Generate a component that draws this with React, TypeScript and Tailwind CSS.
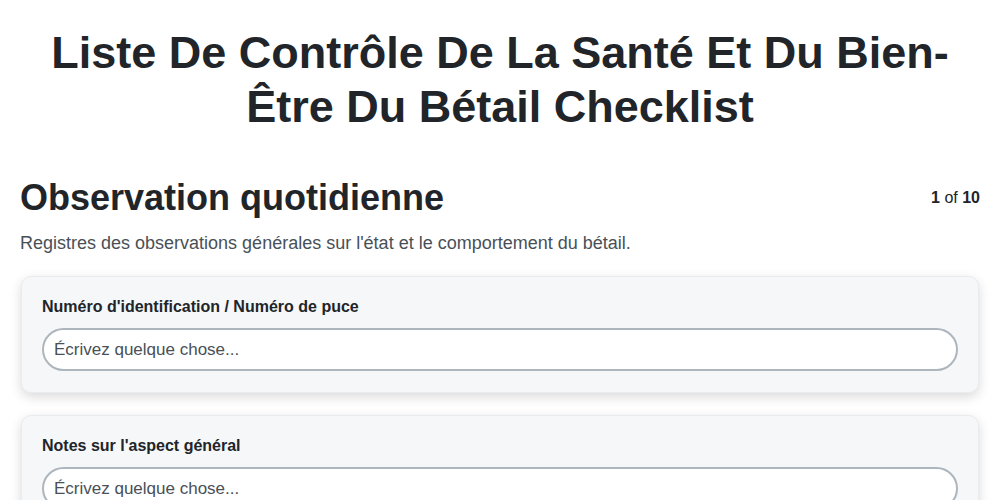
import React from "react"

const fields = [
  "Numéro d'identification / Numéro de puce",
  "Notes sur l'aspect général",
  "Comportement observé",
]

export default function App() {
  return (
    <div className="min-h-screen bg-white text-[#212529] font-['Liberation_Sans',Arial,sans-serif]">
      <div className="px-5">
        <h1 className="pt-[26px] pb-[42px] text-center text-[45px] font-bold leading-[54px]">
          Liste De Contrôle De La Santé Et Du Bien-Être Du Bétail Checklist
        </h1>

        <div className="flex justify-between items-start">
          <h2 className="text-[36px] font-bold leading-[44px]">Observation quotidienne</h2>
          <p className="text-base pt-[10px]">
            <span className="font-bold">1</span> of <span className="font-bold">10</span>
          </p>
        </div>
        <p className="mt-[10px] text-[18px] leading-[26px] text-[#495057]">
          Registres des observations générales sur l'état et le comportement du bétail.
        </p>

        <div className="mt-[20px] mx-px flex flex-col gap-[22px]">
          {fields.map((label) => (
            <div
              key={label}
              className="rounded-[10px] border border-[#e9ecef] bg-[#f6f7f9] px-5 pt-[20px] pb-[21px] shadow-[0_4px_12px_rgba(0,0,0,0.15)]"
            >
              <label className="block text-base font-bold leading-[20px] mb-[11px]">{label}</label>
              <input
                type="text"
                placeholder="Écrivez quelque chose..."
                className="w-full h-[43px] rounded-full border-2 border-[#adb5bd] bg-white px-[10px] text-[17px] placeholder:text-[#495057] outline-none"
              />
            </div>
          ))}
        </div>
      </div>
    </div>
  )
}
